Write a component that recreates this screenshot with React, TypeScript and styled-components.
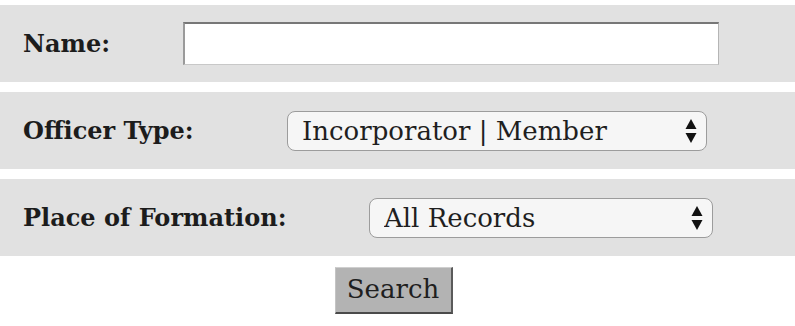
import styled, { createGlobalStyle } from "styled-components";

const GlobalStyle = createGlobalStyle`
  html, body {
    margin: 0;
    padding: 0;
    background: #ffffff;
  }
  body {
    font-family: "DejaVu Serif", "Liberation Serif", serif;
    color: #1a1a1a;
  }
`;

const Form = styled.form`
  display: flex;
  flex-direction: column;
  padding-top: 5px;
`;

const Fields = styled.div`
  display: flex;
  flex-direction: column;
  gap: 10px;
`;

const Band = styled.div`
  display: flex;
  align-items: center;
  height: 77px;
  padding-left: 23px;
  background-color: #e1e1e1;
`;

const Label = styled.label<{ $width: number }>`
  width: ${(p) => p.$width}px;
  flex-shrink: 0;
  font-size: 24px;
  font-weight: bold;
  color: #1c1c1c;
`;

const TextInput = styled.input`
  box-sizing: border-box;
  width: 536px;
  height: 43px;
  margin: 0;
  padding: 0 8px;
  background: #ffffff;
  border-style: solid;
  border-width: 2px 1px 1px 2px;
  border-color: #777777 #b5b5b5 #c8c8c8 #9a9a9a;
  font-family: inherit;
  font-size: 24px;
  outline: none;
`;

const SelectWrap = styled.div<{ $width: number }>`
  position: relative;
  width: ${(p) => p.$width}px;
  height: 40px;
`;

const Select = styled.select`
  box-sizing: border-box;
  appearance: none;
  -webkit-appearance: none;
  width: 100%;
  height: 100%;
  margin: 0;
  padding: 0 40px 0 14px;
  background: #f6f6f6;
  border: 1px solid #9c9c9c;
  border-radius: 8px;
  font-family: inherit;
  font-size: 26px;
  color: #1f1f1f;
  outline: none;
`;

const Arrows = styled.svg`
  position: absolute;
  right: 10px;
  top: 50%;
  transform: translateY(-50%);
  pointer-events: none;
`;

const Actions = styled.div`
  display: flex;
  justify-content: center;
  padding-top: 11px;
  padding-right: 8px;
`;

const SearchButton = styled.button`
  box-sizing: border-box;
  width: 118px;
  height: 47px;
  margin: 0;
  padding: 0 0 2px;
  background: #b3b3b3;
  border-style: solid;
  border-width: 1px 2px 2px 1px;
  border-color: #cfcfcf #5a5a5a #4a4a4a #c4c4c4;
  font-family: inherit;
  font-size: 26px;
  color: #1f1f1f;
  cursor: pointer;
`;

function UpDown() {
  return (
    <Arrows width="12" height="26" viewBox="0 0 12 26">
      <path d="M6 1 L11.5 11 L0.5 11 Z" fill="#111" />
      <path d="M0.5 15 L11.5 15 L6 25 Z" fill="#111" />
    </Arrows>
  );
}

function DropDown({
  width,
  options,
}: {
  width: number;
  options: string[];
}) {
  return (
    <SelectWrap $width={width}>
      <Select defaultValue={options[0]}>
        {options.map((o) => (
          <option key={o}>{o}</option>
        ))}
      </Select>
      <UpDown />
    </SelectWrap>
  );
}

export default function App() {
  return (
    <>
      <GlobalStyle />
      <Form onSubmit={(e) => e.preventDefault()}>
        <Fields>
          <Band>
            <Label $width={160}>Name:</Label>
            <TextInput type="text" />
          </Band>
          <Band>
            <Label $width={264}>Officer Type:</Label>
            <DropDown
              width={420}
              options={["Incorporator | Member", "Officer", "Director"]}
            />
          </Band>
          <Band>
            <Label $width={346}>Place of Formation:</Label>
            <DropDown
              width={344}
              options={["All Records", "Domestic", "Foreign"]}
            />
          </Band>
        </Fields>
        <Actions>
          <SearchButton type="submit">Search</SearchButton>
        </Actions>
      </Form>
    </>
  );
}
